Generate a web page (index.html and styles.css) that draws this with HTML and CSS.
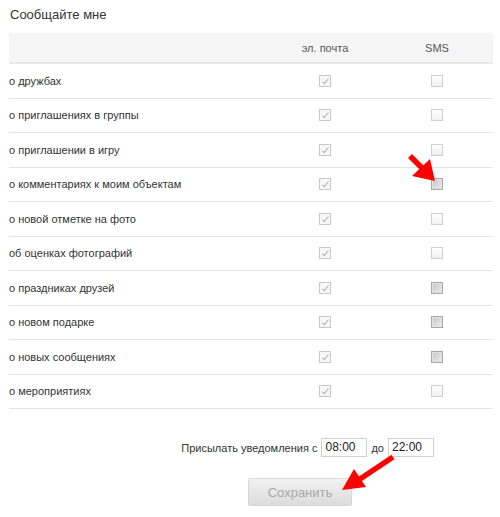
FILE: index.html
```html
<!DOCTYPE html>
<html lang="ru">
<head>
<meta charset="utf-8">
<link rel="stylesheet" href="styles.css">
</head>
<body>
<div class="page">
  <h1 class="title">Сообщайте мне</h1>
  <div class="table">
    <div class="row head">
      <div class="label"></div>
      <div class="col c-email">эл. почта</div>
      <div class="col c-sms">SMS</div>
    </div>
    <div class="row"><div class="label">о дружбах</div><div class="col c-email"><span class="cb checked"></span></div><div class="col c-sms"><span class="cb"></span></div></div>
    <div class="row"><div class="label">о приглашениях в группы</div><div class="col c-email"><span class="cb checked"></span></div><div class="col c-sms"><span class="cb"></span></div></div>
    <div class="row"><div class="label">о приглашении в игру</div><div class="col c-email"><span class="cb checked"></span></div><div class="col c-sms"><span class="cb"></span></div></div>
    <div class="row"><div class="label">о комментариях к моим объектам</div><div class="col c-email"><span class="cb checked"></span></div><div class="col c-sms"><span class="cb dark"></span></div></div>
    <div class="row"><div class="label">о новой отметке на фото</div><div class="col c-email"><span class="cb checked"></span></div><div class="col c-sms"><span class="cb"></span></div></div>
    <div class="row"><div class="label">об оценках фотографий</div><div class="col c-email"><span class="cb checked"></span></div><div class="col c-sms"><span class="cb"></span></div></div>
    <div class="row"><div class="label">о праздниках друзей</div><div class="col c-email"><span class="cb checked"></span></div><div class="col c-sms"><span class="cb dark"></span></div></div>
    <div class="row"><div class="label">о новом подарке</div><div class="col c-email"><span class="cb checked"></span></div><div class="col c-sms"><span class="cb dark"></span></div></div>
    <div class="row"><div class="label">о новых сообщениях</div><div class="col c-email"><span class="cb checked"></span></div><div class="col c-sms"><span class="cb dark"></span></div></div>
    <div class="row"><div class="label">о мероприятиях</div><div class="col c-email"><span class="cb checked"></span></div><div class="col c-sms"><span class="cb"></span></div></div>
  </div>
  <div class="time">
    <span class="time-text">Присылать уведомления с</span>
    <span class="inp">08:00</span>
    <span class="time-text">до</span>
    <span class="inp">22:00</span>
  </div>
  <div class="actions">
    <span class="btn">Сохранить</span>
  </div>
</div>
<svg class="arrow arrow1" width="40" height="40" viewBox="0 0 40 40">
  <line x1="8" y1="5" x2="24" y2="21" stroke="#f00" stroke-width="5.5"/>
  <polygon points="33,30 10,25 28,8" fill="#f00"/>
</svg>
<svg class="arrow arrow2" width="60" height="45" viewBox="0 0 60 45">
  <line x1="55" y1="3" x2="22" y2="25" stroke="#f00" stroke-width="5.5"/>
  <polygon points="4,36 16,15 28,33" fill="#f00"/>
</svg>
</body>
</html>
```
FILE: styles.css
```css
html, body {
  margin: 0;
  padding: 0;
  background: #fff;
}
body {
  font-family: "Liberation Sans", Arial, sans-serif;
  color: #333;
  position: relative;
  width: 500px;
  height: 517px;
  overflow: hidden;
}
.page {
  padding: 6px 7px 0 9px;
}
.title {
  margin: 0 0 0 1px;
  font-size: 13px;
  font-weight: normal;
  line-height: 18px;
  height: 27px;
  color: #333;
}
.table {
  width: 484px;
}
.row {
  display: flex;
  align-items: center;
  height: 34.5px;
  box-sizing: border-box;
  border-bottom: 1px solid #e4e4e4;
  font-size: 11px;
}
.row.head {
  height: 31px;
  background: #f5f5f5;
  border-bottom: 2px solid #e8e8e8;
  color: #555;
}
.label {
  flex: 1;
}
.col {
  display: flex;
  justify-content: center;
  align-items: center;
}
.c-email {
  width: 114px;
}
.c-sms {
  width: 110px;
  margin-right: 1px;
}
.cb {
  width: 10px;
  height: 10px;
  border: 1px solid #cfcfcf;
  background: linear-gradient(#fff, #f0f0f0);
  position: relative;
  display: block;
}
.cb.checked {
  border-color: #c8c8c8;
  background: #f7f7f7;
}
.cb.checked::after {
  content: "";
  position: absolute;
  left: 4px;
  top: 1px;
  width: 2px;
  height: 6px;
  border-right: 1px solid #b0b0b0;
  border-bottom: 1px solid #b0b0b0;
  transform: rotate(40deg);
}
.cb.dark {
  border-color: #a8a8a8;
  background: linear-gradient(135deg, #c4c4c4, #eeeeee);
  box-shadow: inset 0 0 0 1px #e2e2e2;
}
.time {
  display: flex;
  align-items: center;
  justify-content: flex-end;
  gap: 3px;
  padding-right: 59px;
  margin-top: 29px;
  font-size: 11px;
  color: #333;
}
.time-text {
  margin: 0 1px;
}
.inp {
  box-sizing: border-box;
  width: 46px;
  height: 19px;
  border: 1px solid #d0d0d0;
  font-size: 12px;
  line-height: 17px;
  padding-left: 3px;
  color: #222;
  background: #fff;
}
.actions {
  padding-left: 239px;
  margin-top: 21px;
}
.btn {
  display: flex;
  align-items: center;
  justify-content: center;
  box-sizing: border-box;
  width: 104px;
  height: 28px;
  border: 1px solid #d8d8d8;
  border-radius: 2px;
  background: linear-gradient(#f2f2f2, #dcdcdc);
  color: #a8a8a8;
  font-size: 13px;
}
.arrow {
  position: absolute;
}
.arrow1 {
  left: 402px;
  top: 151px;
}
.arrow2 {
  left: 338px;
  top: 454px;
}
```
